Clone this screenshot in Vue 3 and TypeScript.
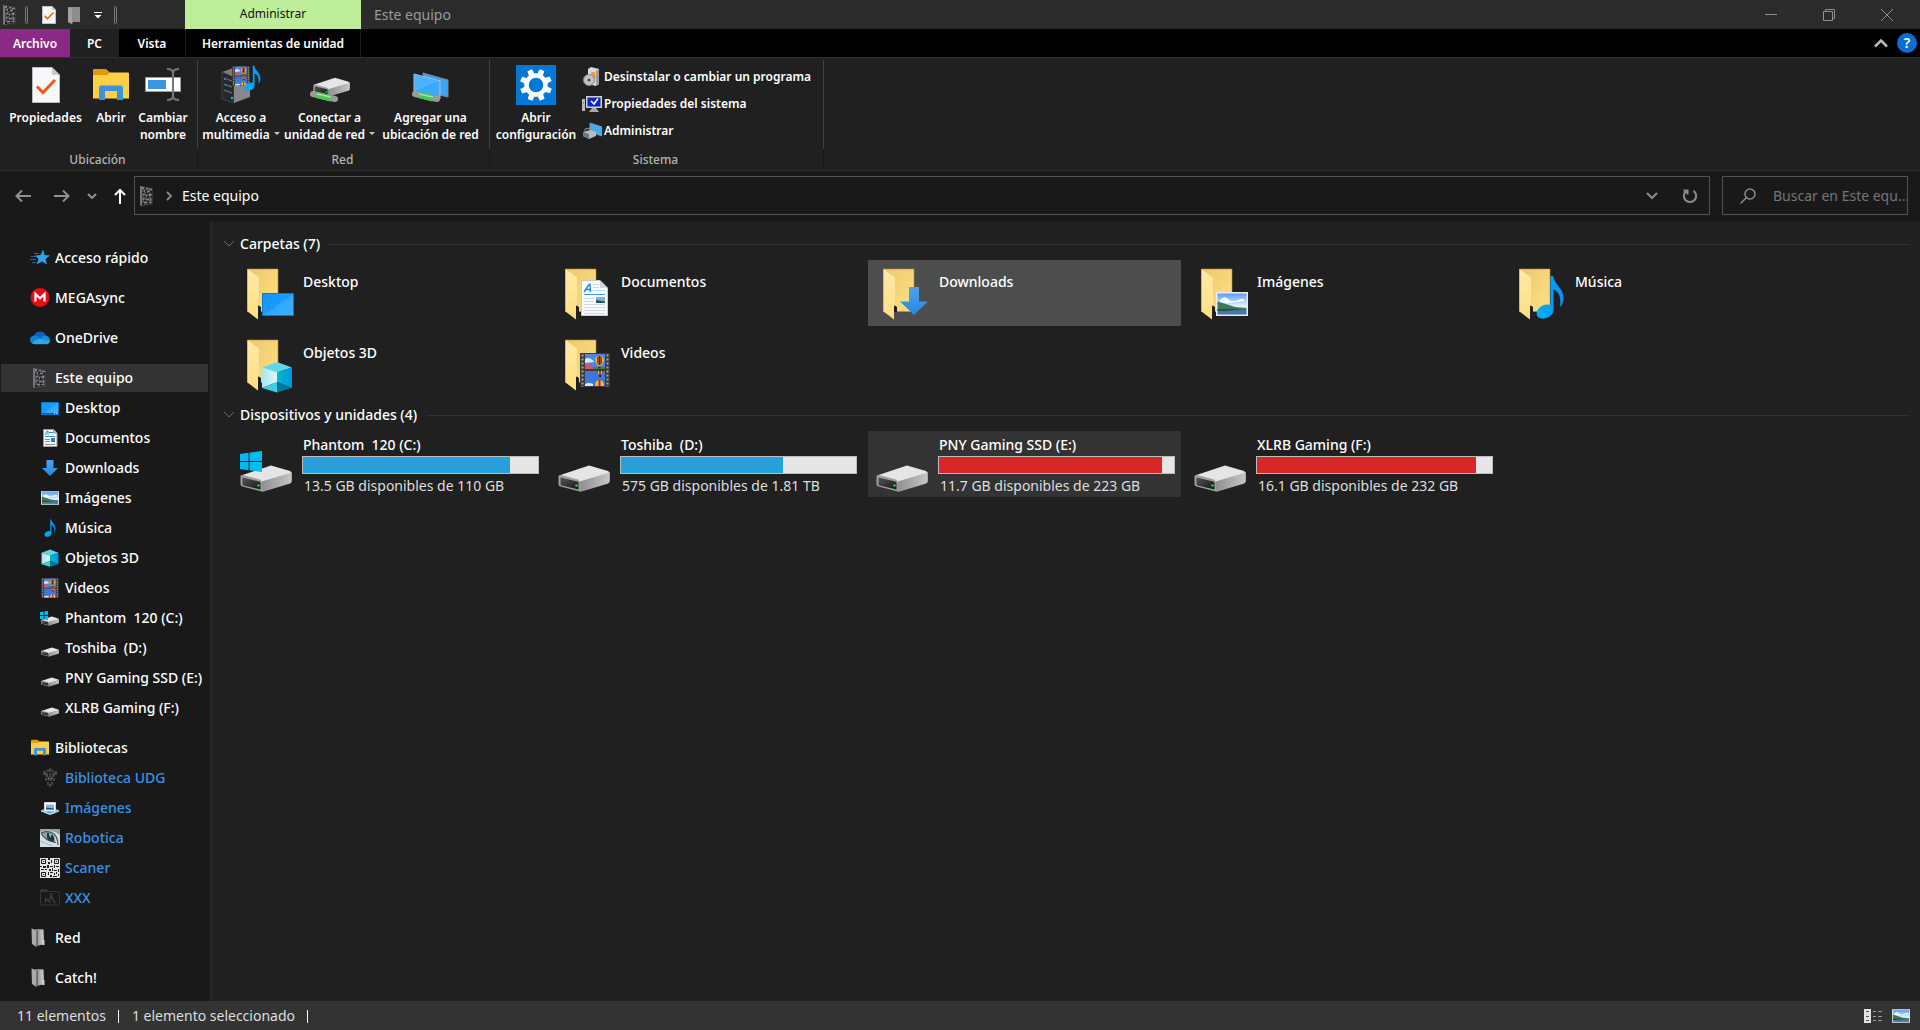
<script setup lang="ts">
import { ref } from 'vue'

interface TreeNode {
  label: string
  icon: string
  level: 0 | 1
  library?: boolean
}

interface Folder {
  label: string
  icon: string
}

interface Drive {
  label: string
  caption: string
  used: number
  full?: boolean
  system?: boolean
}

const tree: TreeNode[] = [
  { label: 'Acceso rápido', icon: 'star', level: 0 },
  { label: 'MEGAsync', icon: 'mega', level: 0 },
  { label: 'OneDrive', icon: 'cloud', level: 0 },
  { label: 'Este equipo', icon: 'pc', level: 0 },
  { label: 'Desktop', icon: 's-desktop', level: 1 },
  { label: 'Documentos', icon: 's-document', level: 1 },
  { label: 'Downloads', icon: 's-download', level: 1 },
  { label: 'Imágenes', icon: 's-picture', level: 1 },
  { label: 'Música', icon: 's-music', level: 1 },
  { label: 'Objetos 3D', icon: 's-cube', level: 1 },
  { label: 'Videos', icon: 's-video', level: 1 },
  { label: 'Phantom  120 (C:)', icon: 's-windrive', level: 1 },
  { label: 'Toshiba  (D:)', icon: 's-drive', level: 1 },
  { label: 'PNY Gaming SSD (E:)', icon: 's-drive', level: 1 },
  { label: 'XLRB Gaming (F:)', icon: 's-drive', level: 1 },
  { label: 'Bibliotecas', icon: 's-library', level: 0 },
  { label: 'Biblioteca UDG', icon: 's-crest', level: 1, library: true },
  { label: 'Imágenes', icon: 's-piclib', level: 1, library: true },
  { label: 'Robotica', icon: 's-eye', level: 1, library: true },
  { label: 'Scaner', icon: 's-qr', level: 1, library: true },
  { label: 'XXX', icon: 's-xxx', level: 1, library: true },
  { label: 'Red', icon: 's-gray', level: 0 },
  { label: 'Catch!', icon: 's-gray', level: 0 },
]

const folders: Folder[] = [
  { label: 'Desktop', icon: 'o-desktop' },
  { label: 'Documentos', icon: 'o-document' },
  { label: 'Downloads', icon: 'o-download' },
  { label: 'Imágenes', icon: 'o-picture' },
  { label: 'Música', icon: 'o-music' },
  { label: 'Objetos 3D', icon: 'o-cube' },
  { label: 'Videos', icon: 'o-video' },
]

const drives: Drive[] = [
  { label: 'Phantom  120 (C:)', caption: '13.5 GB disponibles de 110 GB', used: 88, system: true },
  { label: 'Toshiba  (D:)', caption: '575 GB disponibles de 1.81 TB', used: 69 },
  { label: 'PNY Gaming SSD (E:)', caption: '11.7 GB disponibles de 223 GB', used: 95, full: true },
  { label: 'XLRB Gaming (F:)', caption: '16.1 GB disponibles de 232 GB', used: 93, full: true },
]

const currentNode = ref('Este equipo')
const hoveredFolder = ref('Downloads')
const selectedDrive = ref('PNY Gaming SSD (E:)')
const search = ref('')
</script>

<template>
  <div class="window">
    <svg class="sprite" width="0" height="0" aria-hidden="true">
      <defs>
        <linearGradient id="gFolder" x1="0" y1="0" x2="1" y2="1">
          <stop offset="0" stop-color="#edc868" /><stop offset="1" stop-color="#ffe18a" />
        </linearGradient>
        <linearGradient id="gFlap" x1="0" y1="0" x2="0" y2="1">
          <stop offset="0" stop-color="#ffeaa8" /><stop offset="1" stop-color="#ffdf80" />
        </linearGradient>
        <linearGradient id="gScreen" x1="0" y1="0" x2="1" y2="1">
          <stop offset="0" stop-color="#1296ff" /><stop offset="0.5" stop-color="#1a9bff" /><stop offset="0.52" stop-color="#30a7ff" /><stop offset="1" stop-color="#40b0ff" />
        </linearGradient>
        <linearGradient id="gNote" x1="0" y1="0" x2="1" y2="0">
          <stop offset="0" stop-color="#00b0ff" /><stop offset="1" stop-color="#0590f5" />
        </linearGradient>
        <linearGradient id="gArrow" x1="0" y1="0" x2="0" y2="1">
          <stop offset="0" stop-color="#4ba3ec" /><stop offset="1" stop-color="#2489e0" />
        </linearGradient>
        <linearGradient id="gSky" x1="0" y1="0" x2="0" y2="1">
          <stop offset="0" stop-color="#5a9cf5" /><stop offset="0.6" stop-color="#e4f2fd" /><stop offset="1" stop-color="#b9dcf4" />
        </linearGradient>
        <linearGradient id="gCubeL" x1="0" y1="0" x2="1" y2="0">
          <stop offset="0" stop-color="#a8e6ee" /><stop offset="1" stop-color="#dcf8fa" />
        </linearGradient>
        <linearGradient id="gCubeR" x1="0" y1="0" x2="1" y2="0">
          <stop offset="0" stop-color="#00b8d0" /><stop offset="1" stop-color="#0097e0" />
        </linearGradient>
        <linearGradient id="gSide" x1="0" y1="0" x2="1" y2="0">
          <stop offset="0" stop-color="#8f8f92" /><stop offset="1" stop-color="#c6c6c9" />
        </linearGradient>
        <linearGradient id="gFront" x1="0" y1="0" x2="1" y2="1">
          <stop offset="0" stop-color="#555" /><stop offset="1" stop-color="#161616" />
        </linearGradient>
        <linearGradient id="gGray" x1="0" y1="0" x2="1" y2="0">
          <stop offset="0" stop-color="#8a8a8a" /><stop offset="1" stop-color="#d0d0d0" />
        </linearGradient>

        <symbol id="folder" viewBox="0 0 52 54">
          <path d="M0.500 1H31V43.500H0.500Z" fill="url(#gFolder)" stroke="#b08f43" stroke-width="0.600" />
          <path d="M11 37L14 39V44H11Z" fill="#202020" />
          <path d="M0.500 1L12 9.500V37L11 38V51.500L0.500 43.500Z" fill="url(#gFlap)" />
        </symbol>
        <symbol id="cube" viewBox="0 0 32 32">
          <path d="M16 1L31 6.500L16 11.500L1 6.500Z" fill="#5fd7e5" />
          <path d="M1 6.500L16 11.500V21L1 27Z" fill="url(#gCubeL)" />
          <path d="M31 6.500L16 11.500V21L31 27Z" fill="url(#gCubeR)" />
          <path d="M1 27L16 21V31.500Z" fill="#3ed0e2" />
          <path d="M31 27L16 21V31.500Z" fill="#00789c" />
        </symbol>
        <symbol id="film" viewBox="0 0 30 34">
          <path d="M0 0H30V34H0Z" fill="#3b3b3b" />
          <path d="M2.500 1.500V34M27.500 1.500V34" stroke="#a5a5a5" stroke-width="2" stroke-dasharray="2 2" />
          <path d="M5 1H25V16H5Z" fill="#4f86e0" />
          <path d="M5 18H25V33H5Z" fill="#3f78dd" />
          <path d="M5 6Q8 4 11 6Q13 7 14 9L5 10Z" fill="#d8e5fb" />
          <path d="M5 12L8 10L12 13L14 16H5Z" fill="#d4566d" />
          <path d="M13 14H25V16H13Z" fill="#2f8c3a" />
          <path d="M19.500 3Q24 3 24 7.500Q23 11 20.500 13H18.500Q16 11 15 7.500Q15 3 19.500 3Z" fill="#f2b31b" />
          <path d="M17 4H18.500V11.500L17 10ZM20.500 4H22V10L20.500 11.500Z" fill="#c9262a" />
          <path d="M18.500 3H20.500V12H18.500Z" fill="#4b2f2a" />
          <path d="M18.500 13.500H20.500V15.500H18.500Z" fill="#5a2a18" />
          <path d="M16 18H24L21.500 21.500H18.500Z" fill="#c9262a" />
          <path d="M18 18H19V21H18ZM21 18H22V21H21Z" fill="#f2c21b" />
          <path d="M19 22H21V24H19Z" fill="#222" />
          <path d="M15 33Q15 27 19.500 27Q24 27 24 33Z" fill="#f2c21b" />
          <path d="M18.500 27H20.500V33H18.500Z" fill="#c9262a" />
          <path d="M5 31Q9 29 13 31V33H5Z" fill="#dce8fb" />
        </symbol>
        <symbol id="photo" viewBox="0 0 32 24">
          <path d="M0 0H32V24H0Z" fill="#ececec" />
          <path d="M1.500 1.500H30.500V22.500H1.500Z" fill="url(#gSky)" />
          <path d="M4 8Q8 3 12 7T22 8T29 9L4 12Z" fill="#f4f9ff" />
          <path d="M1.500 9.500L10 12L19 15L30.500 16V18H1.500Z" fill="#3a7a55" />
          <path d="M1.500 17.500H30.500V22.500H1.500Z" fill="#4578a8" />
          <path d="M1.500 17H20L26 17.500L8 19H1.500Z" fill="#25504a" />
        </symbol>
        <symbol id="note" viewBox="0 0 28 44">
          <path d="M14.500 1H17C18.500 10 27.500 13 27.500 23C27.500 27 26 30.500 24 32C25 24 24 17 17.500 14.500V34Q17.500 40 12 42.500Q6 45 2 42Q-1 38 2.500 33.500Q8 28 14.500 30Z" fill="url(#gNote)" />
        </symbol>
        <symbol id="arrow" viewBox="0 0 28 28">
          <path d="M9 0H19V14.500H28L14 28L0 14.500H9Z" fill="url(#gArrow)" />
        </symbol>
        <symbol id="sheet" viewBox="0 0 27 36">
          <path d="M0.500 0.500H19L26.500 8V35.500H0.500Z" fill="#f8f9fa" stroke="#c9c9c9" />
          <path d="M19 0.500V8H26.500Z" fill="#d4d7da" />
          <path d="M3 14.500H24" stroke="#3a9bd9" />
          <path d="M12 4.500H18M12 7.500H18M12 10.500H24" stroke="#b6dcf2" />
          <path d="M3 18.500H13M3 21.500H13M3 24.500H24M3 27.500H24M3 30.500H24M3 33.500H24" stroke="#d5d8da" />
          <path d="M3 12L8 4.500H9L9.500 12M5 9.500H9" stroke="#1e88d2" stroke-width="1.400" fill="none" />
          <path d="M15 17H24V23H15Z" fill="#7ab7e0" /><path d="M15 20L24 21.500V23H15Z" fill="#23594d" />
        </symbol>
        <symbol id="drive" viewBox="0 0 52 27">
          <path d="M31 0.500L50 6Q52 7 51.500 8.500L21.500 17.500L1 10.500Z" fill="#e5e5e8" />
          <path d="M21.500 16.500L51.800 7.500V16.500Q51.500 18 49.500 18.800L22 27Z" fill="url(#gSide)" />
          <path d="M0.500 11.500Q0.500 9.500 3 10L20 14.500Q22 15.500 22 18V26.500L2.500 21.500Q0.500 21 0.500 19Z" fill="#a0a0a2" />
          <path d="M2.500 12.500L19.500 16.500Q20.500 17 20.500 18V24.500L3.500 20.500Q2.500 20 2.500 19Z" fill="url(#gFront)" />
          <circle cx="18.500" cy="20.500" r="1.200" fill="#35d63a" />
        </symbol>
        <symbol id="winlogo" viewBox="0 0 22 21">
          <path d="M0 3L8.500 1.800V10H0ZM9.500 1.700L22 0V10H9.500ZM0 11H8.500V19.200L0 18ZM9.500 11H22V21L9.500 19.300Z" fill="#00bcf2" />
        </symbol>
        <symbol id="library" viewBox="0 0 36 31">
          <path d="M0 1Q0 0 1 0H13L17 3.500V8H0Z" fill="#dd9a0b" />
          <path d="M0 6H14L17 3.500H35Q36 3.500 36 4.500V29.500H0Z" fill="#ffcf48" />
          <path d="M6 31V19Q6 16.500 8.500 16.500H27.500Q30 16.500 30 19V31H24V22H12V31Z" fill="#3a93dd" />
        </symbol>
        <symbol id="check-doc" viewBox="0 0 28 36">
          <path d="M0.500 0.500H20L27.500 8V35.500H0.500Z" fill="#f7f8fa" stroke="#b9bcc2" />
          <path d="M20 0.500V8H27.500Z" fill="#c5c9d1" />
          <path d="M5 19.500L11 25.500L23 13" fill="none" stroke="#ee5a1a" stroke-width="3" />
        </symbol>
        <symbol id="pc" viewBox="0 0 20 20">
          <path d="M3 0L15.500 2V18L13 18.500L5 20L3 19Z" fill="#4a4a50" />
          <path d="M3 0L5 0.500V20L3 19Z" fill="#7c7370" />
          <path d="M5 1h2v2H5zM9 2h2v1H9zM12 3h3v1h-3zM7 4h1v2H7zM10 5h3v1h-3zM6 8h2v1H6zM12 8h2v2h-2zM9 9h1v2H9zM6 12h1v2H6zM9 13h3v1H9zM13 12h1v3h-1zM7 16h3v1H7zM12 16h2v1h-2z" fill="#85858a" />
          <path d="M7 2h2v1H7zM8 4h2v2H8zM13 5h2v2h-2zM5 6h2v1H5zM9 7h3v1H9zM10 10h2v2h-2zM7 10h2v1H7zM14 10h1v2h-1zM7 14h2v1H7zM10 15h2v1h-2zM5 17h2v2H5zM10 17h3v1h-3z" fill="#1f1f23" />
        </symbol>

        <symbol id="star" viewBox="0 0 20 20">
          <path d="M13 1.500L14.500 7L20 7.500L15.500 11L17 16.500L12 13.500L6.500 16.500L8.500 11L5 7.500L10.500 7Z" fill="#2fa4ee" />
          <path d="M4 5.500H9M1 8.500H6M0 11.500H6M2 14.500H6" stroke="#1c6aa2" />
        </symbol>
        <symbol id="mega" viewBox="0 0 20 20">
          <circle cx="10" cy="9.500" r="9.500" fill="#e30c17" />
          <path d="M5.500 13.500V6L10 10.200L14.500 6V13.500" fill="none" stroke="#fff" stroke-width="2.200" />
        </symbol>
        <symbol id="cloud" viewBox="0 0 20 20">
          <path d="M4 8Q5.500 3.500 10 3.500Q14.500 3.500 16 8L10 13Z" fill="#0b62b8" />
          <path d="M0 12Q0 8 4 7.500Q6 7 8 8.500L14 12L5 16Q0.500 16 0 12Z" fill="#1180d6" />
          <path d="M11 9Q13 7.500 15.500 7.500Q19.500 8 20 12V13L14 13Z" fill="#1a8ad8" />
          <path d="M2 15Q6 11 10 10.500L20 13Q19.500 16 16.500 16.300H4.500Q2.500 16 2 15Z" fill="#29a9ea" />
        </symbol>
        <symbol id="s-desktop" viewBox="0 0 20 20">
          <path d="M1.500 4.500H18.500V16.500H1.500Z" fill="url(#gScreen)" stroke="#0d76c9" />
          <path d="M2 15.500H18" stroke="#0b5ea3" /><path d="M14 15.500H17" stroke="#d8ecff" stroke-dasharray="1 1" />
        </symbol>
        <symbol id="s-document" viewBox="0 0 20 20">
          <path d="M3.500 1.500H13.500L17 5V18.500H3.500Z" fill="#f6f6f6" stroke="#9b9b9b" />
          <path d="M13.500 1.500V5H17" fill="#ccc" stroke="#9b9b9b" />
          <path d="M5 7L7 3H8V7M9 4.500H13M5 8.500H15" stroke="#2a90d6" fill="none" />
          <path d="M5 11.500H10M5 13.500H10M5 16.500H15" stroke="#8d8d8d" /><path d="M11 10H15V14H11Z" fill="#3f7ba8" />
        </symbol>
        <symbol id="s-download" viewBox="0 0 20 20">
          <path d="M6.500 2H13.500V10H18L10 18L2 10H6.500Z" fill="url(#gArrow)" />
        </symbol>
        <symbol id="s-picture" viewBox="0 0 20 20">
          <svg x="1" y="3" width="18" height="14"><use href="#photo" /></svg>
        </symbol>
        <symbol id="s-music" viewBox="0 0 20 20">
          <svg x="4" y="1" width="12" height="18"><use href="#note" /></svg>
        </symbol>
        <symbol id="s-cube" viewBox="0 0 20 20">
          <svg x="1" y="1" width="18" height="18"><use href="#cube" /></svg>
        </symbol>
        <symbol id="s-video" viewBox="0 0 20 20">
          <svg x="1" y="0" width="18" height="20"><use href="#film" /></svg>
        </symbol>
        <symbol id="s-drive" viewBox="0 0 20 20">
          <svg x="1" y="9" width="18" height="10"><use href="#drive" /></svg>
        </symbol>
        <symbol id="s-windrive" viewBox="0 0 20 20">
          <svg x="1" y="8" width="18" height="10"><use href="#drive" /></svg>
          <path d="M0 4L3.500 3.500V7H0ZM4.500 3.300L8 3V7H4.500ZM0 8H3.500V11.500L0 11ZM4.500 8H8V12L4.500 11.700Z" fill="#00bcf2" />
        </symbol>
        <symbol id="s-library" viewBox="0 0 20 20">
          <svg x="1" y="1" width="18" height="17"><use href="#library" /></svg>
        </symbol>
        <symbol id="s-crest" viewBox="0 0 20 20">
          <path d="M9 0H11V1L14 2L13 4H7L6 2L9 1Z" fill="#404040" />
          <path d="M3 3H6V5H8V9H6L5 7H3ZM17 3H14V5H12V9H14L15 7H17Z" fill="#484848" />
          <path d="M9 5H11V8L13 10L12 13H8L7 10L9 8Z" fill="#3e3e3e" />
          <path d="M5 10H7V13H5ZM13 10H15V13H13ZM7 14H9V17H7ZM11 14H13V17H11ZM9 16H11V19H9Z" fill="#454545" />
          <path d="M8 10H9V11H8ZM11 10H12V11H11Z" fill="#888" />
        </symbol>
        <symbol id="s-piclib" viewBox="0 0 20 20">
          <path d="M1 12L10 9L19 12L13 16H8Z" fill="#3fa9d8" /><path d="M1 12L10 15.500L19 12V13.500L10 17L1 13.500Z" fill="#bfe6f5" />
          <path d="M4.500 4.500H15.500V13H4.500Z" fill="#fff" stroke="#d5d5d5" />
          <path d="M6 6.500H14V11.500H6Z" fill="#7fb6f0" /><path d="M6 9.500L14 10.500V11.500H6Z" fill="#234e75" />
        </symbol>
        <symbol id="s-eye" viewBox="0 0 20 20">
          <path d="M0 1H20V19H0Z" fill="#d5dfe2" />
          <path d="M0 4Q10 0 20 7V1H0Z" fill="#93a1a6" />
          <path d="M1 5Q4 12 15 14.500Q16 9 11 5.500Q6 3 1 5Z" fill="#8fa2a7" />
          <path d="M7 5Q10 4 13 7Q15 10 14 14Q9 14 7 10Z" fill="#22373c" />
          <path d="M9 5L10 10L12 6Z" fill="#7fd9cf" />
          <path d="M1 5Q8 2 14 6Q18 10 18 17M1 5Q5 13 16 14.500" fill="none" stroke="#41545a" stroke-width="1.200" />
          <path d="M0 13Q7 16 13 18" fill="none" stroke="#a9b8bd" />
        </symbol>
        <symbol id="s-qr" viewBox="0 0 20 20">
          <path d="M0 0H20V20H0Z" fill="#e4e4e4" />
          <path d="M1.500 1.500h4v4h-4zM14.500 1.500h4v4h-4zM1.500 14.500h4v4h-4z" fill="none" stroke="#1b1b1b" />
          <path d="M3 3h1v1H3zM16 3h1v1h-1zM3 16h1v1H3zM8 0h2v2H8zM11 2h1v3h-1zM8 4h2v2H8zM0 8h2v1H0zM3 8h3v2H3zM7 7h2v3H7zM10 8h3v1h-3zM14 7h1v3h-1zM16 8h3v1h-3zM1 11h3v1H1zM5 11h2v1H5zM9 11h2v2H9zM12 10h1v3h-1zM14 12h3v1h-3zM18 11h1v3h-1zM8 14h1v3H8zM10 14h3v1h-3zM14 15h1v2h-1zM16 14h1v2h-1zM10 17h2v2h-2zM13 18h4v1h-4zM18 16h1v2h-1z" fill="#1b1b1b" />
        </symbol>
        <symbol id="s-xxx" viewBox="0 0 20 20">
          <path d="M0.500 3Q0.500 1.500 2 1.500H6L8.500 3.500H18Q19.500 3.500 19.500 5V15.500Q19.500 17 18 17H2Q0.500 17 0.500 15.500Z" fill="none" stroke="#343434" />
          <path d="M0.500 2H7L9 4H0.500Z" fill="#343434" />
          <circle cx="11" cy="6.500" r="1.300" fill="#3c3c3c" />
          <path d="M11 8L15 15M11 8L9 13L6 11L5 14.500M9 13L10 15" stroke="#3c3c3c" stroke-width="1.600" fill="none" />
        </symbol>
        <symbol id="s-gray" viewBox="0 0 20 20">
          <path d="M6 1L13.500 1.500L14 16L7 18Z" fill="url(#gGray)" />
          <path d="M1.500 0.500L6.500 2V19L2 16Z" fill="#a9a9a9" />
          <path d="M6.500 2L8 2.500V17L6.500 19Z" fill="#6d6d6d" />
          <path d="M12.500 12H14.500V17H12Z" fill="#b9d5dc" />
        </symbol>

        <symbol id="o-desktop" viewBox="0 0 52 54">
          <svg width="52" height="54"><use href="#folder" /></svg>
          <path d="M15.500 25.500H46.500V47.500H15.500Z" fill="url(#gScreen)" stroke="#0f78cb" />
        </symbol>
        <symbol id="o-document" viewBox="0 0 52 54">
          <svg width="52" height="54"><use href="#folder" /></svg>
          <svg x="16" y="12" width="27" height="36"><use href="#sheet" /></svg>
        </symbol>
        <symbol id="o-download" viewBox="0 0 52 54">
          <svg width="52" height="54"><use href="#folder" /></svg>
          <svg x="17" y="19" width="28" height="28"><use href="#arrow" /></svg>
        </symbol>
        <symbol id="o-picture" viewBox="0 0 52 54">
          <svg width="52" height="54"><use href="#folder" /></svg>
          <svg x="15" y="24" width="32" height="24"><use href="#photo" /></svg>
        </symbol>
        <symbol id="o-music" viewBox="0 0 52 54">
          <svg width="52" height="54"><use href="#folder" /></svg>
          <svg x="17" y="7" width="28" height="44"><use href="#note" /></svg>
        </symbol>
        <symbol id="o-cube" viewBox="0 0 52 54">
          <svg width="52" height="54"><use href="#folder" /></svg>
          <svg x="14" y="22" width="32" height="32"><use href="#cube" /></svg>
        </symbol>
        <symbol id="o-video" viewBox="0 0 52 54">
          <svg width="52" height="54"><use href="#folder" /></svg>
          <svg x="15" y="14" width="30" height="34"><use href="#film" /></svg>
        </symbol>
        <symbol id="pipe" viewBox="0 0 28 12">
          <path d="M3 3L25 8" stroke="#9a9a9a" stroke-width="6" stroke-linecap="round" />
          <path d="M7 4L21 7.500" stroke="#4fc35a" stroke-width="6" />
          <path d="M7 3L21 6" stroke="#9be79b" stroke-width="1.500" />
        </symbol>
      </defs>
    </svg>

    <header class="titlebar">
      <div class="quick">
        <svg class="i20" viewBox="0 0 20 20"><use href="#pc" /></svg>
        <span class="pill"></span>
        <button class="plain" aria-label="Propiedades"><svg width="14" height="18"><use href="#check-doc" /></svg></button>
        <button class="plain" aria-label="Nueva carpeta">
          <svg width="14" height="18" viewBox="0 0 14 18"><path d="M0 1H12V16H5L4 18L0 16Z" fill="#8d8d8d" /><path d="M0 1L4 3V18L0 16Z" fill="#a3a3a3" /></svg>
        </button>
        <button class="plain" aria-label="Personalizar">
          <svg width="8" height="8" viewBox="0 0 8 8"><path d="M0 1.500H8" stroke="#fff" /><path d="M0.500 4H7.500L4 7.500Z" fill="#fff" /></svg>
        </button>
        <span class="pill"></span>
      </div>
      <div class="context">Administrar</div>
      <h1 class="title">Este equipo</h1>
      <div class="controls">
        <button aria-label="Minimizar"><svg width="12" height="12" viewBox="0 0 12 12"><path d="M0 5.500H12" stroke="#8f8f8f" /></svg></button>
        <button aria-label="Restaurar"><svg width="12" height="12" viewBox="0 0 12 12"><path d="M0.500 2.500H9.500V11.500H0.500ZM2.500 2.500V0.500H11.500V9.500H9.500" fill="none" stroke="#8f8f8f" /></svg></button>
        <button aria-label="Cerrar"><svg width="12" height="12" viewBox="0 0 12 12"><path d="M0 0L12 12M12 0L0 12" stroke="#8f8f8f" /></svg></button>
      </div>
    </header>

    <nav class="tabs">
      <button class="tab file">Archivo</button>
      <button class="tab active">PC</button>
      <button class="tab view">Vista</button>
      <button class="tab tools">Herramientas de unidad</button>
      <div class="tabs-right">
        <button class="plain" aria-label="Contraer la cinta"><svg width="14" height="10" viewBox="0 0 14 10"><path d="M1 8.500L7 2.500L13 8.500" fill="none" stroke="#b8b8b8" stroke-width="2.500" /></svg></button>
        <button class="help" aria-label="Ayuda">?</button>
      </div>
    </nav>

    <section class="ribbon">
      <div class="group location">
        <div class="tools-row">
          <button class="big">
            <svg width="40" height="40" viewBox="0 0 40 40"><svg x="6" y="2" width="28" height="36"><use href="#check-doc" /></svg></svg>
            <span>Propiedades</span>
          </button>
          <button class="big">
            <svg width="40" height="40" viewBox="0 0 40 40"><svg x="2" y="4" width="36" height="31"><use href="#library" /></svg></svg>
            <span>Abrir</span>
          </button>
          <button class="big">
            <svg width="40" height="40" viewBox="0 0 40 40">
              <path d="M2.500 12.500H37.500V26.500H2.500Z" fill="#fff" stroke="#9c9c9c" /><path d="M5 15H23V24H5Z" fill="#3a96dd" />
              <path d="M24 4Q30 4 30 8V31Q30 35 24 35M36 4Q30 4 30 8M30 31Q30 35 36 35" fill="none" stroke="#777" stroke-width="2" />
            </svg>
            <span>Cambiar<br />nombre</span>
          </button>
        </div>
        <p class="caption">Ubicación</p>
      </div>

      <div class="group network">
        <div class="tools-row">
          <button class="big">
            <svg width="40" height="40" viewBox="0 0 40 40">
              <path d="M1 7L12 3L29 8L13 13Z" fill="#77797f" /><path d="M1 7L13 12V38L1 34Z" fill="#24272c" stroke="#5d6066" stroke-width="0.500" />
              <path d="M13 12L29 8V32L13 38Z" fill="#85888f" />
              <path d="M3 13L11 16M3 19L11 22M3 25L11 28" stroke="#5a6068" stroke-width="1.500" />
              <path d="M3 14h1v1H3zM4 20h1v1H4zM10 32h2v2h-2z" fill="#00c8ff" />
              <svg x="11" y="1" width="18" height="20"><use href="#film" /></svg>
              <svg x="23" y="0" width="17" height="26"><use href="#note" /></svg>
            </svg>
            <span>Acceso a<br />multimedia<i class="caret"></i></span>
          </button>
          <button class="big">
            <svg width="40" height="40" viewBox="0 0 40 40">
              <svg x="3" y="12" width="37" height="20"><use href="#drive" /></svg>
              <svg x="0" y="26" width="28" height="12"><use href="#pipe" /></svg>
            </svg>
            <span>Conectar a<br />unidad de red<i class="caret"></i></span>
          </button>
          <button class="big">
            <svg width="40" height="40" viewBox="0 0 40 40">
              <path d="M12 8L37 15V32L12 26Z" fill="#3aa7f2" stroke="#7a8a94" />
              <path d="M3 9L29 16V34L3 28Z" fill="#38aaff" stroke="#b5c0c6" />
              <path d="M4 10L27 16L4 26Z" fill="#4bb4ff" />
              <svg x="1" y="26" width="28" height="12"><use href="#pipe" /></svg>
            </svg>
            <span>Agregar una<br />ubicación de red</span>
          </button>
        </div>
        <p class="caption">Red</p>
      </div>

      <div class="group system">
        <div class="tools-row">
          <button class="big">
            <svg width="40" height="40" viewBox="0 0 40 40">
              <path d="M0 0H40V40H0Z" fill="#0078d7" />
              <circle cx="20" cy="20" r="9.500" fill="none" stroke="#fff" stroke-width="4.500" />
              <g fill="#fff">
                <path id="tooth" d="M17.500 4H22.500L23 10H17Z" transform="rotate(22 20 20)" />
                <use v-for="n in 7" :key="n" href="#tooth" :transform="`rotate(${n * 45} 20 20)`" />
              </g>
            </svg>
            <span>Abrir<br />configuración</span>
          </button>
          <div class="small-list">
            <button class="small">
              <svg class="i20" viewBox="0 0 20 20">
                <path d="M6 2L9 0L17 2V17L14 19L6 17Z" fill="#d9d9d9" /><path d="M14 4L17 2V17L14 19Z" fill="#9d9d9d" /><path d="M9 5H13L14 11L10 12Z" fill="#ef9a3c" />
                <circle cx="7" cy="13" r="5.500" fill="#bfc3c6" stroke="#858a8d" /><circle cx="7" cy="13" r="1.500" fill="#4b4b4b" />
              </svg>
              <span>Desinstalar o cambiar un programa</span>
            </button>
            <button class="small">
              <svg class="i20" viewBox="0 0 20 20">
                <path d="M0 5H3V17H0Z" fill="#b9b9b9" /><path d="M1 8H2V10H1Z" fill="#2bd034" />
                <path d="M4 2H20V14H4Z" fill="#cfcfcf" /><path d="M5.500 3.500H18.500V12.500H5.500Z" fill="#1420c8" />
                <path d="M9 7L12 10L16 4.500" fill="none" stroke="#fff" stroke-width="1.600" /><path d="M10 14H14L17 18H7Z" fill="#a8a8a8" />
              </svg>
              <span>Propiedades del sistema</span>
            </button>
            <button class="small">
              <svg class="i20" viewBox="0 0 20 20">
                <path d="M8 2L20 6V15L8 11Z" fill="#43adf2" stroke="#86949c" />
                <path d="M1 11L8 9L14 11V15L7 18L1 15Z" fill="#b8bbbf" /><path d="M1 11L7 13V18L1 15Z" fill="#74777b" /><path d="M3 10V8L8 7V9" fill="none" stroke="#8d9094" />
              </svg>
              <span>Administrar</span>
            </button>
          </div>
        </div>
        <p class="caption">Sistema</p>
      </div>
    </section>

    <div class="navbar">
      <div class="arrows">
        <button class="plain" aria-label="Atrás"><svg width="16" height="12" viewBox="0 0 16 12"><path d="M16 6H1.500M7 0.500L1.500 6L7 11.500" fill="none" stroke="#919191" stroke-width="2" /></svg></button>
        <button class="plain forward" aria-label="Adelante"><svg width="16" height="12" viewBox="0 0 16 12"><path d="M0 6H14.500M9 0.500L14.500 6L9 11.500" fill="none" stroke="#919191" stroke-width="2" /></svg></button>
        <button class="plain" aria-label="Recientes"><svg width="10" height="6" viewBox="0 0 10 6"><path d="M1 1L5 5L9 1" fill="none" stroke="#919191" stroke-width="2" /></svg></button>
        <button class="plain" aria-label="Subir"><svg width="12" height="16" viewBox="0 0 12 16"><path d="M6 16V2M1 7L6 2L11 7" fill="none" stroke="#fff" stroke-width="2" /></svg></button>
      </div>
      <div class="address">
        <svg class="i20" viewBox="0 0 20 20"><use href="#pc" /></svg>
        <svg width="6" height="10" viewBox="0 0 6 10"><path d="M1 1L5 5L1 9" fill="none" stroke="#8b8b8b" stroke-width="1.800" /></svg>
        <span class="crumb">Este equipo</span>
        <button class="plain drop" aria-label="Ubicaciones anteriores"><svg width="12" height="8" viewBox="0 0 12 8"><path d="M1 1L6 6L11 1" fill="none" stroke="#8b8b8b" stroke-width="2" /></svg></button>
        <button class="plain refresh" aria-label="Actualizar"><svg width="16" height="16" viewBox="0 0 16 16"><path d="M11.500 2.800A6.200 6.200 0 1 1 4.500 2.800M1.500 2.500H5.500V6.500" fill="none" stroke="#8b8b8b" stroke-width="2" /></svg></button>
      </div>
      <label class="search">
        <svg width="16" height="16" viewBox="0 0 16 16"><circle cx="10" cy="6" r="5" fill="none" stroke="#8b8b8b" stroke-width="1.500" /><path d="M6.500 9.500L0.500 15.500" stroke="#8b8b8b" stroke-width="1.500" /></svg>
        <input v-model="search" type="text" placeholder="Buscar en Este equ..." aria-label="Buscar en Este equipo" />
      </label>
    </div>

    <div class="body">
      <nav class="sidebar">
        <a
          v-for="(node, index) in tree"
          :key="index"
          href="#"
          class="node"
          :class="{ top: node.level === 0, current: node.label === currentNode, library: node.library }"
          @click.prevent="currentNode = node.label"
        >
          <svg class="i20" viewBox="0 0 20 20"><use :href="`#${node.icon}`" /></svg>
          <span>{{ node.label }}</span>
        </a>
      </nav>

      <main class="content">
        <section>
          <h2 class="heading">
            <svg width="12" height="8" viewBox="0 0 12 8"><path d="M1 1L6 6L11 1" fill="none" stroke="#6a6a6a" /></svg>
            <span>Carpetas (7)</span>
          </h2>
          <div class="grid">
            <button v-for="folder in folders" :key="folder.label" class="item folder" :class="{ hover: folder.label === hoveredFolder }" @mouseenter="hoveredFolder = folder.label">
              <svg width="52" height="54"><use :href="`#${folder.icon}`" /></svg>
              <span class="name">{{ folder.label }}</span>
            </button>
          </div>
        </section>

        <section>
          <h2 class="heading">
            <svg width="12" height="8" viewBox="0 0 12 8"><path d="M1 1L6 6L11 1" fill="none" stroke="#6a6a6a" /></svg>
            <span>Dispositivos y unidades (4)</span>
          </h2>
          <div class="grid">
            <button v-for="drive in drives" :key="drive.label" class="item drive" :class="{ selected: drive.label === selectedDrive }" @click="selectedDrive = drive.label">
              <svg width="52" height="42" viewBox="0 0 52 42">
                <svg y="14" width="52" height="27"><use href="#drive" /></svg>
                <svg v-if="drive.system" width="22" height="21"><use href="#winlogo" /></svg>
              </svg>
              <span class="info">
                <span class="name">{{ drive.label }}</span>
                <span class="bar"><span class="fill" :class="{ full: drive.full }" :style="{ width: drive.used + '%' }"></span></span>
                <span class="free">{{ drive.caption }}</span>
              </span>
            </button>
          </div>
        </section>
      </main>
    </div>

    <footer class="status">
      <span class="count">11 elementos</span>
      <span class="picked">1 elemento seleccionado</span>
      <div class="views">
        <button class="plain" aria-label="Detalles">
          <svg width="18" height="14" viewBox="0 0 18 14"><path d="M0 0H7V14H0Z" fill="#e3e3e3" /><path d="M2 2.500H5M2 7.500H5M2 11.500H5" stroke="#555" /><path d="M9 2.500H12M14 2.500H18M9 7.500H12M14 7.500H18M9 11.500H12M14 11.500H18" stroke="#9a9a9a" /></svg>
        </button>
        <button class="plain" aria-label="Iconos grandes"><svg width="18" height="14"><use href="#photo" /></svg></button>
      </div>
    </footer>
  </div>
</template>

<style>
body {
  background: #202020;
}
</style>

<style scoped>
.window {
  display: flex;
  flex-direction: column;
  min-height: 100vh;
  background: #202020;
  color: #fff;
  font-family: "Noto Sans", "Open Sans", sans-serif;
  font-size: 14px;
  line-height: 20px;
}

.window *,
.window *::before,
.window *::after {
  box-sizing: border-box;
}

.sprite {
  position: absolute;
}

svg {
  display: block;
  flex: none;
}

button {
  margin: 0;
  padding: 0;
  border: 0;
  background: none;
  color: inherit;
  font: inherit;
}

.plain {
  display: flex;
}

.i20 {
  width: 20px;
  height: 20px;
}

.titlebar {
  display: flex;
  height: 29px;
  background: #2b2b2b;
}

.quick {
  display: flex;
  align-items: center;
  gap: 12px;
  width: 185px;
}

.quick .i20 {
  margin-right: -7px;
}

.quick .pill + button {
  margin-left: 2px;
}

.pill {
  width: 3px;
  height: 18px;
  border: 1px solid #7b7b7b;
  border-radius: 2px;
}

.context {
  width: 176px;
  padding-top: 4px;
  background: #bfee9a;
  color: #111;
  font-size: 12px;
  text-align: center;
}

.title {
  flex: 1;
  margin: 0;
  padding: 5px 0 0 13px;
  color: #9a9a9a;
  font-size: 14px;
  font-weight: 400;
}

.controls {
  display: flex;
  margin-right: 4px;
}

.controls button {
  display: flex;
  align-items: center;
  justify-content: center;
  width: 58px;
}

.tabs {
  display: flex;
  height: 28px;
  background: #000;
}

.tab {
  padding-top: 2px;
  font-size: 12px;
  font-weight: 600;
}

.file {
  width: 70px;
  background: #8b2a86;
}

.active {
  width: 49px;
  background: #202020;
}

.view {
  width: 66px;
}

.tools {
  width: 176px;
  border: solid #1c1c1c;
  border-width: 0 1px;
}

.tabs-right {
  display: flex;
  align-items: center;
  gap: 9px;
  margin-left: auto;
  padding-right: 3px;
}

.help {
  width: 20px;
  height: 20px;
  border-radius: 50%;
  background: #0a6fd0;
  font-size: 14px;
  font-weight: 600;
  line-height: 20px;
}

.ribbon {
  display: flex;
  height: 114px;
  border: solid #2e2e2e;
  border-width: 1px 0;
}

.group {
  display: flex;
  flex-direction: column;
  margin: 2px 0;
  border-right: 1px solid;
  border-image: linear-gradient(#404040 0 88px, #181818 88px) 1;
}

.location {
  width: 198px;
}

.network {
  width: 292px;
}

.system {
  width: 334px;
}

.tools-row {
  display: flex;
  flex: 1;
  padding-top: 5px;
}

.big {
  display: flex;
  flex: none;
  flex-direction: column;
  align-items: center;
  gap: 4px;
  align-self: flex-start;
  font-size: 12px;
  font-weight: 600;
  line-height: 17px;
  text-align: center;
  white-space: nowrap;
}

.location .big:first-child {
  width: 91px;
}

.location .big:last-child {
  width: 64px;
}

.network .big:first-child {
  width: 86px;
}

.network .big:nth-child(2) {
  width: 91px;
}

.network .big:last-child {
  width: 111px;
}

.system .big {
  width: 92px;
}

.caret {
  display: inline-block;
  margin: 0 0 4px 4px;
  border: 3px solid transparent;
  border-top-color: #c9c9c9;
  border-bottom: 0;
}

.small-list {
  display: flex;
  flex-direction: column;
  gap: 7px;
  padding-top: 2px;
}

.small {
  display: flex;
  align-items: center;
  gap: 2px;
  height: 20px;
  font-size: 12px;
  font-weight: 600;
  white-space: nowrap;
}

.caption {
  margin: 0;
  padding-right: 2px;
  color: #b4b4b4;
  font-size: 12px;
  font-weight: 500;
  line-height: 16px;
  text-align: center;
}

.navbar {
  display: flex;
  align-items: center;
  height: 51px;
  padding: 0 12px 2px 0;
  background: #191919;
}

.arrows {
  display: flex;
  align-items: center;
  gap: 17px;
  width: 134px;
  padding-left: 15px;
}

.forward {
  margin-left: 6px;
}

.address {
  display: flex;
  flex: 1;
  align-items: center;
  height: 39px;
  padding-left: 2px;
  border: 1px solid #535353;
}

.address > svg + svg {
  margin-left: 9px;
}

.crumb {
  flex: 1;
  padding-left: 10px;
}

.drop {
  justify-content: center;
  width: 38px;
}

.refresh {
  align-items: center;
  justify-content: center;
  width: 38px;
  height: 100%;
}

.search {
  display: flex;
  align-items: center;
  gap: 17px;
  width: 186px;
  height: 39px;
  margin-left: 12px;
  padding-left: 17px;
  border: 1px solid #535353;
}

.search input {
  flex: 1;
  min-width: 0;
  padding: 0;
  border: 0;
  outline: 0;
  background: none;
  color: #fff;
  font: inherit;
}

.search input::placeholder {
  color: #757575;
  opacity: 1;
}

.body {
  display: flex;
  flex: 1;
}

.sidebar {
  width: 212px;
  padding: 10px 2px 4px 1px;
  border-right: 2px solid #272727;
  background: #191919;
}

.node {
  display: flex;
  align-items: center;
  gap: 5px;
  height: 28px;
  margin: 2px 0;
  padding-left: 39px;
  color: #fff;
  font-weight: 500;
  text-decoration: none;
  white-space: pre;
}

.node.top {
  margin-top: 12px;
  padding-left: 29px;
}

.node.current {
  background: #333;
}

.node.library {
  color: #3a93e0;
}

.content {
  flex: 1;
  padding: 11px 10px 0 11px;
}

.heading {
  display: flex;
  align-items: center;
  gap: 5px;
  height: 22px;
  margin: 0;
  font-size: 14px;
  font-weight: 500;
}

.heading::after {
  flex: 1;
  height: 1px;
  margin-left: 4px;
  background: #303030;
  content: "";
}

.grid {
  display: grid;
  grid-template-columns: repeat(auto-fill, 313px);
  gap: 5px;
  margin: 5px 0 7px 9px;
}

.item {
  display: flex;
  height: 66px;
  text-align: left;
  white-space: pre;
}

.name {
  font-weight: 500;
}

.folder {
  gap: 4px;
  padding: 8px 0 0 15px;
}

.folder .name {
  margin-top: 4px;
}

.hover {
  background: #4d4d4d;
}

.drive {
  gap: 10px;
  padding: 4px 6px 0 8px;
}

.drive > svg {
  margin-top: 16px;
}

.selected {
  background: #333;
}

.info {
  display: flex;
  flex: 1;
  flex-direction: column;
}

.info .name {
  padding-left: 1px;
}

.bar {
  height: 18px;
  margin: 1px 0 2px;
  border: 1px solid #bcbcbc;
  background: #e6e6e6;
}

.fill {
  display: block;
  height: 100%;
  background: #26a0da;
}

.fill.full {
  background: #da2626;
}

.free {
  padding-left: 2px;
  color: #dedede;
}

.status {
  display: flex;
  align-items: center;
  height: 29px;
  background: #333;
  color: #dedede;
}

.count {
  padding-left: 17px;
}

.count::after,
.picked::after {
  display: inline-block;
  width: 1px;
  height: 13px;
  margin: 0 13px 0 12px;
  background: #fff;
  vertical-align: -2px;
  content: "";
}

.views {
  display: flex;
  gap: 10px;
  margin-left: auto;
  padding-right: 10px;
}
</style>
